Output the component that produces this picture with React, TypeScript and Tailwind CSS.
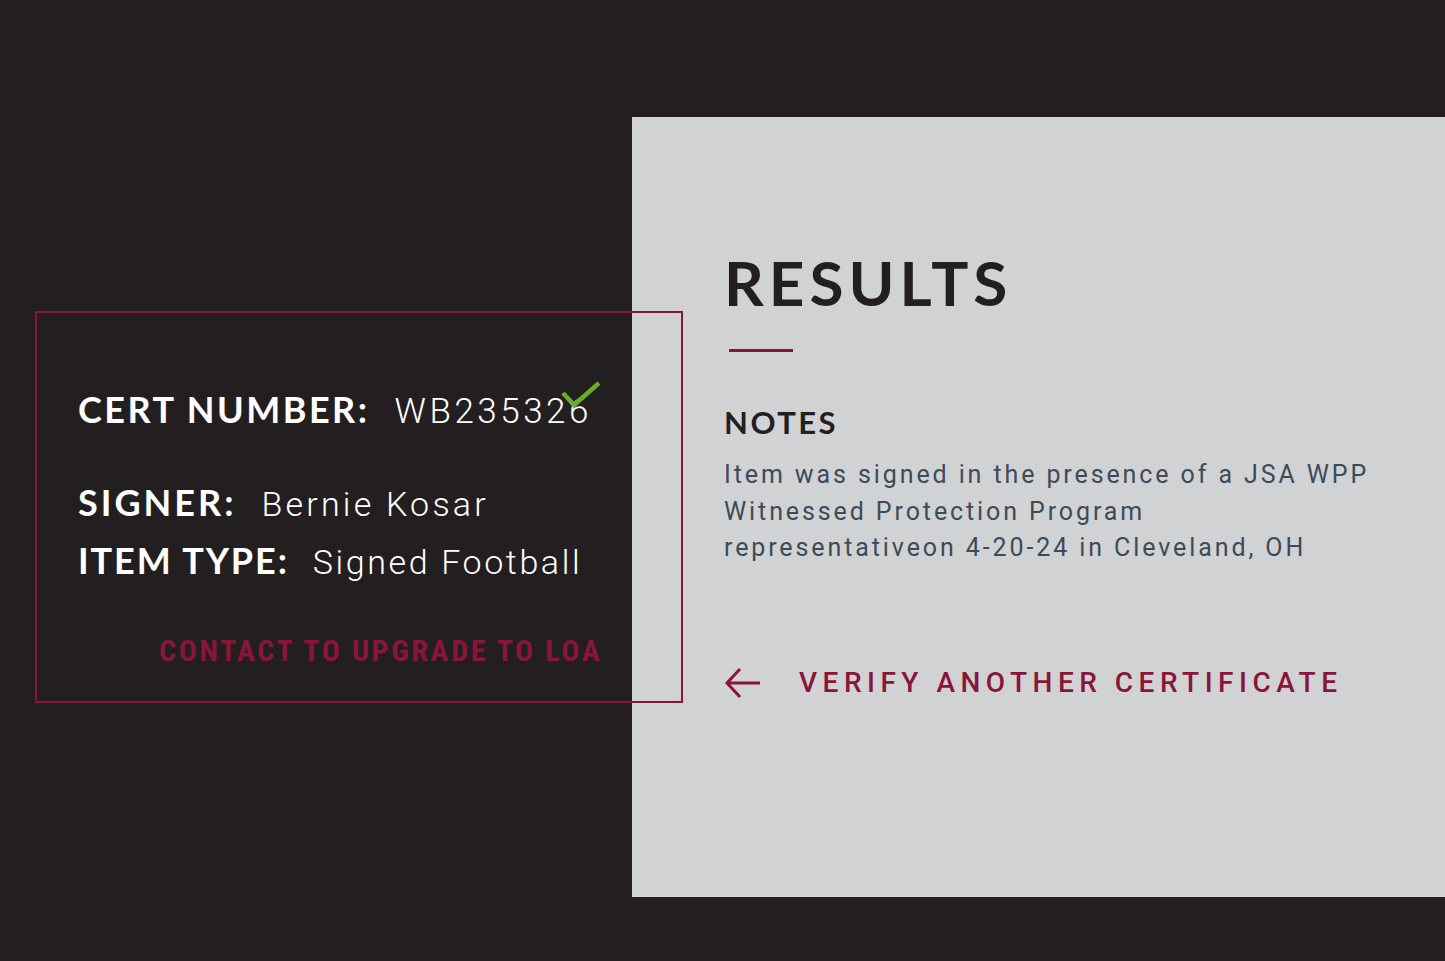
import React from "react";

const heading = { fontFamily: '"Lato", "Noto Sans", sans-serif' };
const body = { fontFamily: '"Roboto", "Liberation Sans", sans-serif' };

export default function App() {
  return (
    <div className="w-[1445px] h-[961px] bg-[#231f20] pt-[117px] flex overflow-hidden">
      <div className="w-[632px] shrink-0 relative z-10">
        <div className="ml-[35px] mt-[194px] w-[648px] h-[392px] border-2 border-[#8a1538] pl-[41px] pt-[78px]">
          <div className="flex items-baseline text-white leading-none">
            <span style={heading} className="text-[36px] font-bold tracking-[2.5px]">CERT NUMBER:</span>
            <span style={body} className="relative ml-[25px] text-[35px] tracking-[3.5px] font-light">
              WB235326
              <svg className="absolute right-[-10px] top-[-14px]" width="42" height="32" viewBox="0 0 42 32">
                <path d="M3 13 L14 25 L39 3" fill="none" stroke="#6aac2a" strokeWidth="4.5" />
              </svg>
            </span>
          </div>
          <div className="flex items-baseline text-white leading-none mt-[55px]">
            <span style={heading} className="text-[36px] font-bold tracking-[3px]">SIGNER:</span>
            <span style={body} className="ml-[25px] text-[34px] tracking-[3.2px] font-light">Bernie Kosar</span>
          </div>
          <div className="flex items-baseline text-white leading-none mt-[21px]">
            <span style={heading} className="text-[36px] font-bold tracking-[1.9px]">ITEM TYPE:</span>
            <span style={body} className="ml-[24px] text-[34px] tracking-[2.6px] font-light">Signed Football</span>
          </div>
          <div
            style={{ fontFamily: '"Liberation Sans Narrow", "Roboto Condensed", "Liberation Sans", sans-serif' }}
            className="mt-[57px] ml-[81px] text-[30px] font-bold leading-none tracking-[2.6px] text-[#8a1538]"
          >
            CONTACT TO UPGRADE TO LOA
          </div>
        </div>
      </div>
      <div className="flex-1 h-[780px] bg-[#d1d2d4] pl-[92px] pt-[134px]">
        <h1 style={heading} className="text-[62px] font-bold leading-none tracking-[5px] text-[#231f20]">
          RESULTS
        </h1>
        <div className="mt-[36px] ml-[5px] w-[64px] h-[3px] bg-[#8a1538]" />
        <h2 style={heading} className="mt-[55px] text-[31px] font-bold leading-none tracking-[2.5px] text-[#231f20]">
          NOTES
        </h2>
        <p style={body} className="mt-[19px] w-[660px] text-[25px] leading-[36.5px] tracking-[2.9px] text-[#3d4b57]">
          Item was signed in the presence of a JSA WPP Witnessed Protection Program representativeon 4-20-24 in Cleveland, OH
        </p>
        <div className="mt-[99px] flex items-center text-[#8a1538]">
          <svg width="38" height="34" viewBox="0 0 38 34" className="shrink-0">
            <path d="M36 17 H3 M16 3 L3 17 L16 31" fill="none" stroke="#8a1538" strokeWidth="3" />
          </svg>
          <span style={body} className="ml-[37px] text-[28px] font-medium leading-none tracking-[5.5px]">
            VERIFY ANOTHER CERTIFICATE
          </span>
        </div>
      </div>
    </div>
  );
}
